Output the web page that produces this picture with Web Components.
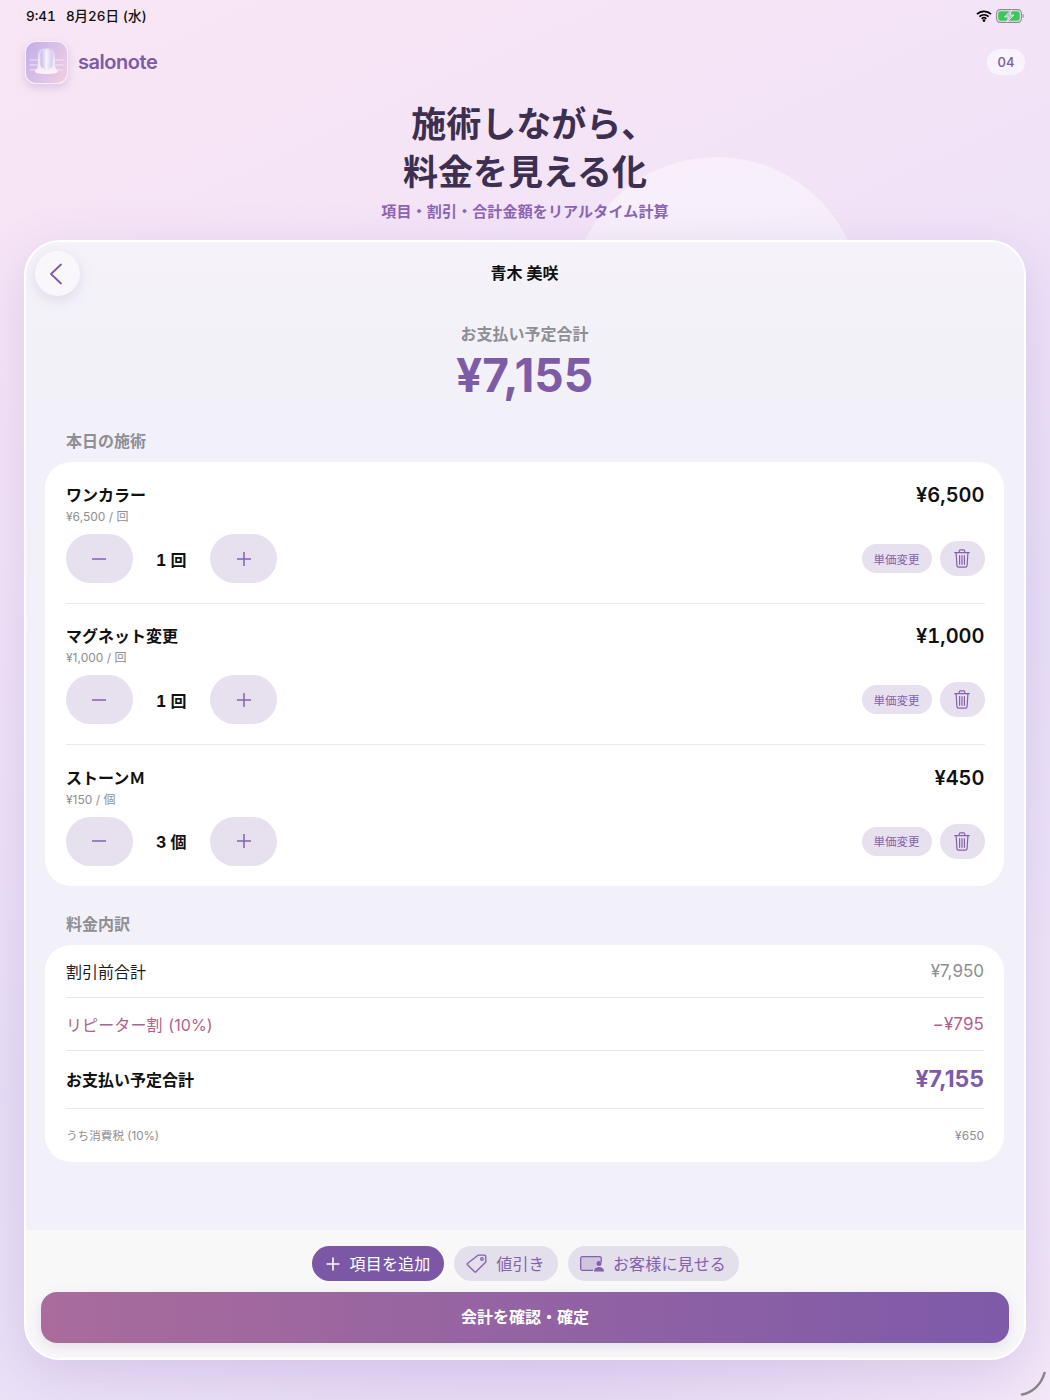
<!DOCTYPE html>
<html lang="ja">
<head>
<meta charset="utf-8">
<title>salonote</title>
<style>
  html, body { margin: 0; padding: 0; }
  body {
    width: 1050px;
    height: 1400px;
    overflow: hidden;
    font-family: Inter, "Noto Sans CJK JP", sans-serif;
    background:
      radial-gradient(700px 500px at 520px 1300px, #e4d8f3 0%, rgba(228,216,243,0) 100%),
      linear-gradient(155deg, #f9e6f4 0%, #f2e3f7 30%, #e8dff6 58%, #efe6f8 80%, #f7ecf9 100%);
  }
</style>
</head>
<body>
<salon-screen>
  <item-row name="ワンカラー" unit="¥6,500 / 回" qty="1 回" price="¥6,500"></item-row>
  <item-row name="マグネット変更" unit="¥1,000 / 回" qty="1 回" price="¥1,000"></item-row>
  <item-row name="ストーンＭ" unit="¥150 / 個" qty="3 個" price="¥450" last></item-row>
</salon-screen>

<script>
// Small helper so every component gets an open shadow root from a template string
function shadow(el, html) {
  el.attachShadow({ mode: 'open' }).innerHTML = html;
}

class StatusBar extends HTMLElement {
  constructor() {
    super();
    shadow(this, `
      <style>
        :host { display: flex; justify-content: space-between; align-items: center;
          height: 32px; padding: 0 26px; box-sizing: border-box; color: #111;
          font-size: 13.5px; font-weight: 500; }
        .time { display: flex; gap: 10px; align-items: baseline; line-height: 20px; font-variant-numeric: tabular-nums; margin-top: -1px; }
        .icons { display: flex; align-items: center; gap: 4px; }
        svg { display: block; }
      </style>
      <div class="time"><span>9:41</span><span>8月26日 (水)</span></div>
      <div class="icons">
        <svg width="16" height="12" viewBox="0 0 16 12">
          <path d="M1 4.200a10 10 0 0 1 14 0M3.400 6.600a6.600 6.600 0 0 1 9.200 0M5.700 8.800a3.300 3.300 0 0 1 4.600 0" fill="none" stroke="#000" stroke-width="1.700"/>
          <circle cx="8" cy="10.600" r="1.300" fill="#000"/>
        </svg>
        <svg width="28" height="14" viewBox="0 0 28 14">
          <rect x=".6" y=".6" width="24.800" height="12.800" rx="3.600" fill="none" stroke="#8b8b8b" stroke-width="1.100"/>
          <rect x="2.200" y="2.200" width="21.600" height="9.600" rx="2.200" fill="#3cc75c"/>
          <path d="M26.600 5v4c.9-.3 1.200-1.100 1.200-2s-.3-1.700-1.200-2z" fill="#8b8b8b"/>
          <path d="M15.600 .8 8.600 8h4l-1.800 5.200L18 6h-4z" fill="#c3bad6" stroke="#efe6f7" stroke-width=".9"/>
        </svg>
      </div>
    `);
  }
}

class AppHeader extends HTMLElement {
  constructor() {
    super();
    shadow(this, `
      <style>
        :host { display: flex; justify-content: space-between; align-items: center;
          height: 44px; padding: 0 25px; margin-top: 8px; box-sizing: border-box; }
        .brand { display: flex; align-items: center; gap: 10px; }
        .logo { width: 43px; height: 43px; border-radius: 11px; box-sizing: border-box;
          border: 1px solid rgba(255,255,255,.75); overflow: hidden;
          background: linear-gradient(120deg, #c2aee6 0%, #d9c0e8 50%, #f3cfe0 100%);
          box-shadow: 0 4px 10px rgba(120,90,170,.22); }
        .name { font-size: 20px; font-weight: 600; color: #7d5ba6; letter-spacing: -.45px; }
        .page { width: 38px; height: 26px; border-radius: 13px; background: #f8f3fc;
          color: #7d5ba6; font-size: 13px; font-weight: 500; display: flex;
          align-items: center; justify-content: center; }
        svg { display: block; }
      </style>
      <div class="brand">
        <div class="logo">
          <svg width="41" height="41" viewBox="0 0 41 41">
            <defs>
              <linearGradient id="nail" x1="0" y1="0" x2="0" y2="1">
                <stop offset="0" stop-color="#d9cdee"/>
                <stop offset=".55" stop-color="#f0e9f7"/>
                <stop offset="1" stop-color="#fbf4f8"/>
              </linearGradient>
              <linearGradient id="shine" x1="0" y1="0" x2="1" y2="0">
                <stop offset="0" stop-color="#c6b7e7"/>
                <stop offset=".5" stop-color="#f6f2fb"/>
                <stop offset="1" stop-color="#d4c8ec"/>
              </linearGradient>
            </defs>
            <g stroke="#f1e6f5" stroke-width="1.200" stroke-linecap="round">
              <path d="M4 18h8M4 23h8M4 28h8M29 18h8M29 23h8M29 28h8"/>
            </g>
            <path d="M9 29.500c0-1.500 3-2.500 3-6.500V13c0-4.500 3.500-7 8.500-7s8.500 2.500 8.500 7v10c0 4 3 5 3 6.500 0 1.500-4.500 2.500-11.500 2.500S9 31 9 29.500z" fill="url(#nail)"/>
            <path d="M14.500 23V13.500c0-4 2.500-6.200 6-6.200s6 2.200 6 6.200V23c0 2.600-2.500 4-6 4s-6-1.400-6-4z" fill="url(#shine)"/>
          </svg>
        </div>
        <span class="name">salonote</span>
      </div>
      <span class="page">04</span>
    `);
  }
}

class HeroTitle extends HTMLElement {
  constructor() {
    super();
    shadow(this, `
      <style>
        :host { display: block; text-align: center; padding-top: 16px; height: 156px; box-sizing: border-box; }
        h1 { margin: 0; font-size: 35px; line-height: 48px; font-weight: 700; color: #3d2f4f; }
        h1 span { letter-spacing: -.5em; }
        p { margin: 5px 0 0; font-size: 15px; line-height: 22px; font-weight: 700; color: #8b64b4; letter-spacing: .15px; }
      </style>
      <h1>施術しながら<span>、</span><br>料金を見える化</h1>
      <p>項目・割引・合計金額をリアルタイム計算</p>
    `);
  }
}

class IconButton extends HTMLElement {
  constructor() {
    super();
    shadow(this, `
      <style>
        :host { display: flex; align-items: center; justify-content: center;
          width: 67px; height: 49px; border-radius: 24.500px; background: #e7e1ef; color: #8560ae; }
        svg { display: block; }
      </style>
      <svg width="14" height="14" viewBox="0 0 14 14" fill="none" stroke="currentColor" stroke-width="1.500">
        <path d="${this.getAttribute('kind') === 'plus' ? 'M7 0v14M0 7h14' : 'M0 7h14'}"/>
      </svg>
    `);
  }
}

class ItemRow extends HTMLElement {
  constructor() {
    super();
    const a = n => this.getAttribute(n) || '';
    shadow(this, `
      <style>
        :host { display: block; padding: 21px 19.500px 0 20.500px; height: 141.300px; box-sizing: border-box; }
        .inner { height: 120px; border-bottom: 1px solid #ebe9ef; box-sizing: content-box; }
        :host([last]) .inner { border-bottom: none; }
        .top { display: flex; justify-content: space-between; align-items: flex-start; }
        .name { font-size: 16px; line-height: 24px; font-weight: 700; color: #111; padding-left: .5px; }
        .price { font-size: 20px; line-height: 24px; font-weight: 600; color: #111; font-variant-numeric: tabular-nums; }
        .unit { font-size: 12px; line-height: 16px; margin-top: 2px; color: #8e8e93; padding-left: .5px; }
        .controls { display: flex; justify-content: space-between; align-items: center; margin-top: 9px; }
        .stepper, .edit { display: flex; align-items: center; }
        .qty { width: 77.500px; text-align: center; font-size: 16px; font-weight: 700; color: #111; font-variant-numeric: tabular-nums; }
        .edit { gap: 8px; }
        .change { width: 70px; height: 29px; border-radius: 14.500px; background: #e7e1ef; color: #8560ae;
          font-size: 11.500px; display: flex; align-items: center; justify-content: center; }
        .trash { width: 45px; height: 35px; border-radius: 17.500px; background: #e7e1ef;
          display: flex; align-items: center; justify-content: center; }
        svg { display: block; }
      </style>
      <div class="inner">
        <div class="top">
          <div>
            <div class="name">${a('name')}</div>
            <div class="unit">${a('unit')}</div>
          </div>
          <div class="price">${a('price')}</div>
        </div>
        <div class="controls">
          <div class="stepper">
            <icon-button kind="minus"></icon-button>
            <div class="qty">${a('qty')}</div>
            <icon-button kind="plus"></icon-button>
          </div>
          <div class="edit">
            <div class="change">単価変更</div>
            <div class="trash">
              <svg width="16" height="19" viewBox="0 0 16 19" fill="none" stroke="#8560ae" stroke-width="1.200" stroke-linecap="round">
                <path d="M.7 3.600h14.600M5.200 3.400V2.200c0-.8.5-1.400 1.300-1.400h3c.8 0 1.300.6 1.300 1.400v1.200"/>
                <path d="M2.100 3.800l.8 12.800c.1 1 .7 1.600 1.700 1.600h6.800c1 0 1.600-.6 1.700-1.600l.8-12.800"/>
                <path d="M5.600 6.500v8.800M8 6.500v8.800M10.400 6.500v8.800"/>
              </svg>
            </div>
          </div>
        </div>
      </div>
    `);
  }
}

class SummaryRow extends HTMLElement {
  constructor() {
    super();
    const a = n => this.getAttribute(n) || '';
    shadow(this, `
      <style>
        :host { display: flex; justify-content: space-between; align-items: center;
          margin: 0 20px 0 21px; box-sizing: border-box; font-size: 16px; color: #1c1c1e;
          border-bottom: 1px solid #e9e7ee; height: ${a('h') || 53}px; }
        :host([kind=discount]) { color: #b05f8e; word-spacing: 1px; letter-spacing: .1px; }
        :host([kind=discount]) .value { color: #b05f8e; }
        :host([kind=total]) { font-weight: 700; color: #111; }
        :host([kind=total]) .value { color: #7d5ba6; font-size: 23px; font-weight: 700; }
        :host([kind=tax]) { font-size: 11.600px; color: #8e8e93; border-bottom: none; }
        :host([kind=tax]) .value { font-size: 12px; color: #8e8e93; }
        .value { font-size: 17px; color: #8e8e93; }
      </style>
      <span>${a('label')}</span><span class="value">${a('value')}</span>
    `);
  }
}

class ActionChip extends HTMLElement {
  constructor() {
    super();
    shadow(this, `
      <style>
        :host { display: flex; align-items: center; justify-content: center; gap: 9px; height: 35px;
          border-radius: 17.500px; background: #e3dfeb; color: #8560ae; font-size: 16px; letter-spacing: .15px; box-sizing: border-box; }
        :host([primary]) { background: #7b57a6; color: #fff; }
        .text { margin-top: -2px; }
      </style>
      <slot name="icon"></slot><span class="text"><slot></slot></span>
    `);
  }
}

class SalonScreen extends HTMLElement {
  constructor() {
    super();
    shadow(this, `
      <style>
        :host { display: block; position: relative; height: 1400px; overflow: hidden; }
        .blob { position: absolute; left: 571px; top: 157px; width: 291px; height: 291px; border-radius: 50%;
          background: rgba(255,255,255,.42); }
        .top { position: relative; }
        .card { position: relative; margin: 0 24px; height: 1120px; box-sizing: border-box; display: flex; flex-direction: column;
          border: 2px solid #fff; border-radius: 36px; overflow: hidden; background: #f2f0f8;
          box-shadow: 0 14px 50px rgba(130,95,190,.20); }
        .scroll { flex: 1; padding: 0 20px 0 19px; background: linear-gradient(#f5f3f9 0, #f2f0f8 170px); }
        .customer { text-align: center; font-size: 16px; line-height: 22px; font-weight: 700; color: #111; padding-top: 20px; }
        .due { text-align: center; font-size: 16px; line-height: 22px; font-weight: 700; color: #8e8e93; margin-top: 39px; }
        .amount { text-align: center; font-size: 46px; line-height: 56px; font-weight: 700; color: #7d5ba6; margin-top: 2px; }
        .label { font-size: 16px; line-height: 22px; font-weight: 700; color: #8e8e93; padding-left: 21px; }
        .label.first { margin-top: 27px; }
        .label.second { margin-top: 27px; }
        .panel { background: #fff; border-radius: 26px; margin-top: 10px; }
        .foot { height: 128px; flex: none; background: #f8f8f9; padding: 16px 15px 0; box-sizing: border-box; }
        .chips { display: flex; justify-content: center; gap: 10px; }
        .confirm { height: 50.500px; margin-top: 11px; border-radius: 16px; color: #fff; font-size: 16px; font-weight: 700;
          display: flex; align-items: center; justify-content: center; padding-bottom: 2px; box-sizing: border-box;
          background: linear-gradient(90deg, #a96c9c 0%, #7e5aa9 100%);
          box-shadow: 0 4px 14px rgba(110,80,150,.14); }
        .back { position: absolute; left: 9px; top: 9px; width: 45px; height: 45px; border-radius: 50%;
          background: #f9f6fc; box-shadow: 0 4px 14px rgba(120,90,170,.16); display: flex; align-items: center; justify-content: center; padding-right: 4px; box-sizing: border-box; }
        .corner { position: absolute; left: 1020px; top: 1370px; }
        svg { display: block; }
      </style>
      <div class="blob"></div>
      <div class="top">
        <status-bar></status-bar>
        <app-header></app-header>
        <hero-title></hero-title>
      </div>
      <div class="card">
        <div class="back">
          <svg width="14" height="22" viewBox="0 0 14 22" fill="none" stroke="#7d5ba6" stroke-width="1.800" stroke-linecap="round" stroke-linejoin="round">
            <path d="M12 1.500 2 11l10 9.500"/>
          </svg>
        </div>
        <div class="scroll">
          <div class="customer">青木 美咲</div>
          <div class="due">お支払い予定合計</div>
          <div class="amount">¥7,155</div>
          <div class="label first">本日の施術</div>
          <div class="panel"><slot></slot></div>
          <div class="label second">料金内訳</div>
          <div class="panel">
            <summary-row label="割引前合計" value="¥7,950"></summary-row>
            <summary-row label="リピーター割 (10%)" value="−¥795" kind="discount"></summary-row>
            <summary-row label="お支払い予定合計" value="¥7,155" kind="total" h="58"></summary-row>
            <summary-row label="うち消費税 (10%)" value="¥650" kind="tax" h="53"></summary-row>
          </div>
        </div>
        <div class="foot">
          <div class="chips">
            <action-chip primary style="width:132px">
              <svg slot="icon" width="16" height="16" viewBox="0 0 16 16" fill="none" stroke="#fff" stroke-width="1.600"><path d="M8 1.500v13M1.500 8h13"/></svg>
              項目を追加
            </action-chip>
            <action-chip style="width:104px">
              <svg slot="icon" width="21" height="19" viewBox="0 0 21 19" fill="none" stroke="#8560ae" stroke-width="1.300" stroke-linejoin="round">
                <path d="M12 1.200h6.300a1.500 1.500 0 0 1 1.500 1.500v5.300L10 17.800a1 1 0 0 1-1.400 0L1.400 10.800a1 1 0 0 1 0-1.400z"/><circle cx="16" cy="5" r="1.300"/>
              </svg>
              値引き
            </action-chip>
            <action-chip style="width:171px">
              <svg slot="icon" width="24" height="16" viewBox="0 0 24 16">
                <path d="M21.300 6V2.200c0-.8-.6-1.500-1.500-1.500H2.200C1.300.7.700 1.400.700 2.200v10.600c0 .8.600 1.500 1.500 1.500H13" fill="#cfc6de" stroke="#8560ae" stroke-width="1.300"/>
                <circle cx="19" cy="7.500" r="2.500" fill="#8560ae"/>
                <path d="M14 15.500c0-2.800 2.200-4.500 5-4.500s5 1.700 5 4.500z" fill="#8560ae"/>
              </svg>
              お客様に見せる
            </action-chip>
          </div>
          <div class="confirm">会計を確認・確定</div>
        </div>
      </div>
      <svg class="corner" width="28" height="28" viewBox="0 0 28 28" fill="none">
        <path d="M2 24.500C12 23 21 15 24.500 3" stroke="#858585" stroke-width="2.500" stroke-linecap="round"/>
      </svg>
    `);
  }
}

customElements.define('status-bar', StatusBar);
customElements.define('app-header', AppHeader);
customElements.define('hero-title', HeroTitle);
customElements.define('icon-button', IconButton);
customElements.define('item-row', ItemRow);
customElements.define('summary-row', SummaryRow);
customElements.define('action-chip', ActionChip);
customElements.define('salon-screen', SalonScreen);
</script>
</body>
</html>
